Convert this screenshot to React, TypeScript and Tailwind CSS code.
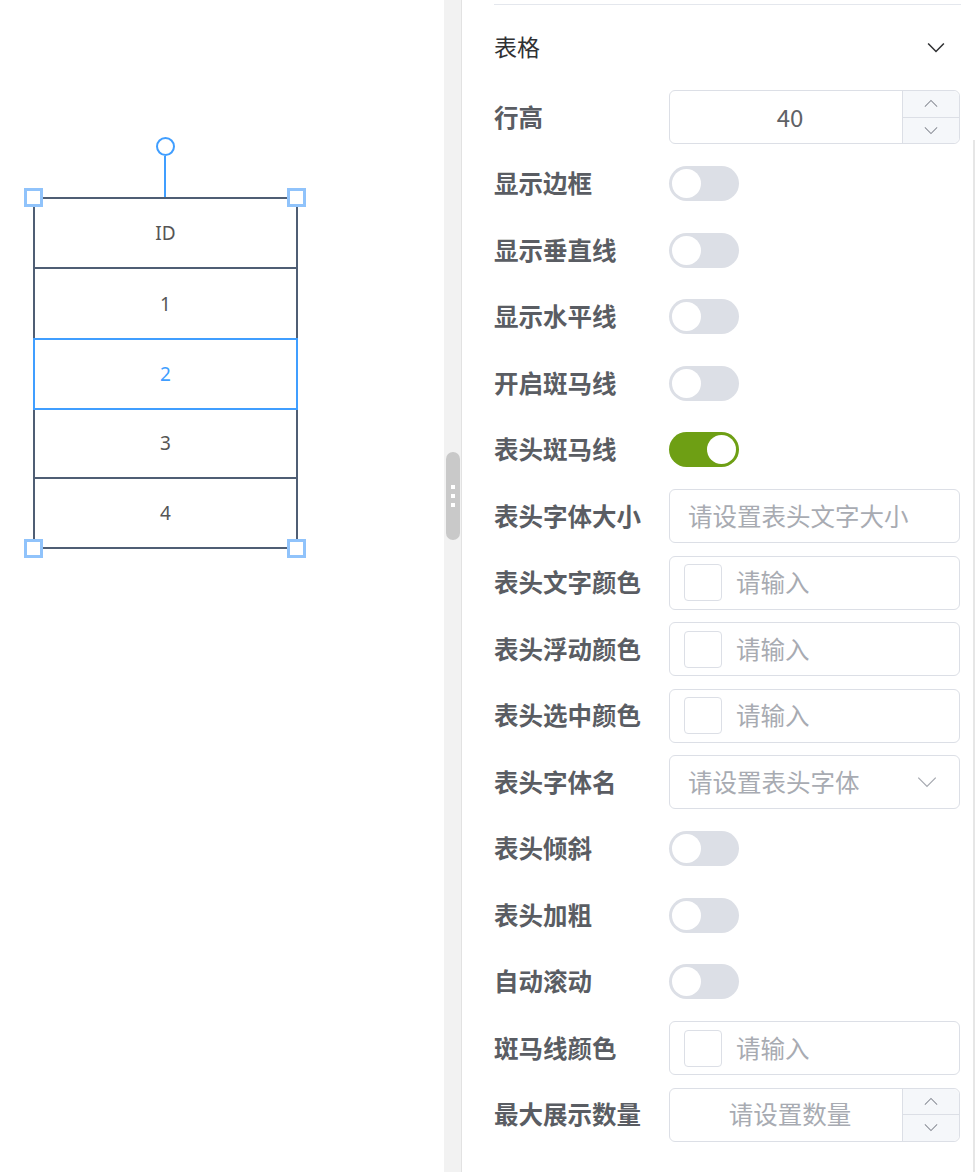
import React from "react";

const FONT = { fontFamily: '"Noto Sans CJK SC", "Noto Sans", sans-serif' };

function Chevron({ dir = "down", size = 14, color = "#a8abb2", sw = 1.3 }: { dir?: "up" | "down"; size?: number; color?: string; sw?: number }) {
  return (
    <svg width={size} height={size / 2 + 2} viewBox="0 0 16 9" fill="none">
      {dir === "down" ? (
        <polyline points="1,1 8,8 15,1" stroke={color} strokeWidth={sw} strokeLinejoin="miter" />
      ) : (
        <polyline points="1,8 8,1 15,8" stroke={color} strokeWidth={sw} strokeLinejoin="miter" />
      )}
    </svg>
  );
}

function Switch({ on = false }: { on?: boolean }) {
  return (
    <div
      className={`w-[70px] h-[35px] rounded-full flex items-center px-[3px] ${
        on ? "bg-[#6e9f14] justify-end" : "bg-[#dcdfe6] justify-start"
      }`}
    >
      <div className="w-[29px] h-[29px] rounded-full bg-white" />
    </div>
  );
}

function Stepper() {
  return (
    <div className="w-[57px] h-full border-l border-[#dcdfe6] bg-[#f5f7fa] flex flex-col rounded-r-[6px]">
      <div className="flex-1 flex items-center justify-center border-b border-[#dcdfe6]">
        <Chevron dir="up" size={14} color="#8d9099" sw={1.2} />
      </div>
      <div className="flex-1 flex items-center justify-center">
        <Chevron dir="down" size={14} color="#8d9099" sw={1.2} />
      </div>
    </div>
  );
}

function Box({ children }: { children: React.ReactNode }) {
  return (
    <div className="w-[291px] h-[54px] border border-[#dcdfe6] rounded-[6px] bg-white flex items-center overflow-hidden">
      {children}
    </div>
  );
}

function ColorInput() {
  return (
    <Box>
      <div className="ml-[14px] w-[38px] h-[37px] border border-[#dcdfe6] rounded-[4px] bg-white" />
      <span className="ml-[14px] text-[24.5px] text-[#a8abb2] leading-none">请输入</span>
    </Box>
  );
}

type Row = { label: string; el: React.ReactNode };

export default function App() {
  const rows: Row[] = [
    {
      label: "行高",
      el: (
        <Box>
          <div className="flex-1 flex items-center justify-center text-[24px] text-[#606266] pl-[8px] leading-none">40</div>
          <Stepper />
        </Box>
      ),
    },
    { label: "显示边框", el: <Switch /> },
    { label: "显示垂直线", el: <Switch /> },
    { label: "显示水平线", el: <Switch /> },
    { label: "开启斑马线", el: <Switch /> },
    { label: "表头斑马线", el: <Switch on /> },
    {
      label: "表头字体大小",
      el: (
        <Box>
          <span className="pl-[18px] text-[24.5px] text-[#a8abb2] leading-none">请设置表头文字大小</span>
        </Box>
      ),
    },
    { label: "表头文字颜色", el: <ColorInput /> },
    { label: "表头浮动颜色", el: <ColorInput /> },
    { label: "表头选中颜色", el: <ColorInput /> },
    {
      label: "表头字体名",
      el: (
        <Box>
          <span className="pl-[18px] flex-1 text-[24.5px] text-[#a8abb2] leading-none">请设置表头字体</span>
          <div className="pr-[22px] flex items-center">
            <Chevron dir="down" size={20} color="#a8abb2" sw={1.1} />
          </div>
        </Box>
      ),
    },
    { label: "表头倾斜", el: <Switch /> },
    { label: "表头加粗", el: <Switch /> },
    { label: "自动滚动", el: <Switch /> },
    { label: "斑马线颜色", el: <ColorInput /> },
    {
      label: "最大展示数量",
      el: (
        <Box>
          <div className="flex-1 flex items-center justify-center text-[24.5px] text-[#a8abb2] pl-[8px] leading-none">请设置数量</div>
          <Stepper />
        </Box>
      ),
    },
  ];

  return (
    <div className="flex w-[976px] h-[1172px] bg-white overflow-hidden" style={FONT}>
      {/* Canvas */}
      <div className="relative w-[444px] h-full bg-white">
        {/* rotation handle */}
        <div className="absolute left-[156px] top-[137px] w-[19px] h-[19px] rounded-full border-2 border-[#409eff] bg-white" />
        <div className="absolute left-[164px] top-[156px] w-[2px] h-[42px] bg-[#409eff]" />
        {/* table */}
        <div className="absolute left-[33px] top-[197px] w-[265px] flex flex-col border-2 border-[#4f5e74] text-[19px]" style={{ fontFamily: '"Noto Sans", sans-serif' }}>
          <div className="h-[70px] flex items-center justify-center text-[#555] border-b-2 border-[#4f5e74]">ID</div>
          <div className="h-[70px] flex items-center justify-center text-[#555]">1</div>
          <div className="relative h-[70px] flex items-center justify-center text-[#409eff]">
            <div className="absolute -left-[2px] -right-[2px] -top-[1px] -bottom-[1px] border-2 border-[#409eff]" />
            2
          </div>
          <div className="h-[70px] flex items-center justify-center text-[#555] border-b-2 border-[#4f5e74]">3</div>
          <div className="h-[68px] flex items-center justify-center text-[#555]">4</div>
        </div>
        {/* corner handles */}
        <div className="absolute left-[24px] top-[188px] w-[19px] h-[19px] border-[3px] border-[#90c3fb] bg-white" />
        <div className="absolute left-[287px] top-[188px] w-[19px] h-[19px] border-[3px] border-[#90c3fb] bg-white" />
        <div className="absolute left-[24px] top-[539px] w-[19px] h-[19px] border-[3px] border-[#90c3fb] bg-white" />
        <div className="absolute left-[287px] top-[539px] w-[19px] h-[19px] border-[3px] border-[#90c3fb] bg-white" />
      </div>

      {/* splitter */}
      <div className="w-[18px] h-full bg-[#f2f2f2] border-r border-[#e2e2e2] flex flex-col items-center pt-[452px]">
        <div className="w-[14px] h-[88px] rounded-full bg-[#c9c9c9] flex flex-col items-center justify-center gap-[5px]">
          <div className="w-[4px] h-[4px] bg-white" />
          <div className="w-[4px] h-[4px] bg-white" />
          <div className="w-[4px] h-[4px] bg-white" />
        </div>
      </div>

      {/* panel */}
      <div className="relative flex-1 h-full pl-[32px] pr-[15px]">
        <div className="absolute right-[1px] top-[140px] bottom-0 w-[2px] bg-[#e6e6e6]" />
        <div className="mt-[4px] h-px bg-[#e4e7ed]" />
        <div className="h-[85px] flex items-center justify-between">
          <span className="text-[23px] text-[#303133] leading-none -mt-[2px]">表格</span>
          <div className="mr-[16px] flex items-center">
            <Chevron dir="down" size={18} color="#303133" sw={1.4} />
          </div>
        </div>
        <div className="flex flex-col gap-[12.53px]">
          {rows.map((r) => (
            <div key={r.label} className="h-[54px] flex items-center">
              <div className="w-[175px] text-[24.5px] font-bold text-[#5a5d63] whitespace-nowrap leading-none">{r.label}</div>
              {r.el}
            </div>
          ))}
        </div>
      </div>
    </div>
  );
}
